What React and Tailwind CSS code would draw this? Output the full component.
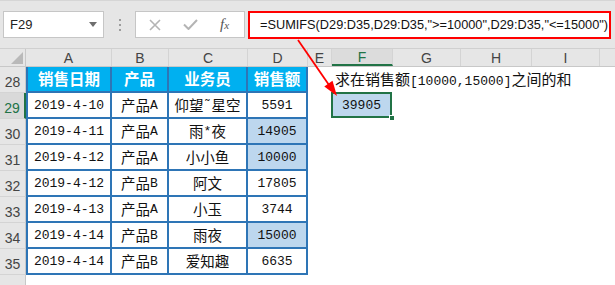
import React from "react";

const Z = ({ children, cls = "" }) => (
  <span className={"font-['Noto_Sans_CJK_SC',sans-serif] text-[14.5px] leading-none " + cls}>{children}</span>
);
const M = ({ children, cls = "" }) => (
  <span className={"font-['Liberation_Mono',monospace] text-[13px] leading-none " + cls}>{children}</span>
);

const rows = [
  { n: 29, d: "2019-4-10", p: "A", name: [["z", "仰望"], ["m", "˜"], ["z", "星空"]], v: "5591", h: false, sel: true },
  { n: 30, d: "2019-4-11", p: "A", name: [["z", "雨"], ["m", "*"], ["z", "夜"]], v: "14905", h: true },
  { n: 31, d: "2019-4-12", p: "A", name: [["z", "小小鱼"]], v: "10000", h: true },
  { n: 32, d: "2019-4-12", p: "B", name: [["z", "阿文"]], v: "17805", h: false },
  { n: 33, d: "2019-4-13", p: "A", name: [["z", "小玉"]], v: "3744", h: false },
  { n: 34, d: "2019-4-14", p: "B", name: [["z", "雨夜"]], v: "15000", h: true },
  { n: 35, d: "2019-4-14", p: "B", name: [["z", "爱知趣"]], v: "6635", h: false },
];

function RowHdr({ n, sel }) {
  return (
    <div
      className={
        "w-[26px] shrink-0 flex items-end justify-center pb-[3px] border-b border-[#d4d4d4] text-[14px] leading-none " +
        (sel
          ? "bg-[#d9d9d9] text-[#217346] border-r-2 border-r-[#217346]"
          : "bg-[#e6e6e6] text-[#444] border-r border-r-[#c8c8c8]")
      }
    >
      {n}
    </div>
  );
}

const tb = "border-[#2e75b6] border-r-2 border-b-2 flex items-center justify-center shrink-0";

export default function App() {
  return (
    <div className="relative w-[615px] h-[285px] overflow-hidden bg-white font-['Liberation_Sans',Arial,sans-serif]">
      {/* top bar */}
      <div className="h-[48px] bg-[#e6e6e6] border-t border-[#d6d6d6] flex items-start pt-[10px]">
        <div className="ml-[3px] w-[101px] h-[27px] bg-white border border-[#c6c6c6] flex items-center pl-[6px] pr-[6px]">
          <span className="text-[13px] text-[#222] flex-1">F29</span>
          <svg width="8" height="5" viewBox="0 0 8 5"><polygon points="0,0 8,0 4,5" fill="#6e6e6e" /></svg>
        </div>
        <div className="ml-[15px] h-[27px] flex flex-col justify-center gap-[3px]">
          <div className="w-[2px] h-[2px] bg-[#9d9d9d]" />
          <div className="w-[2px] h-[2px] bg-[#9d9d9d]" />
          <div className="w-[2px] h-[2px] bg-[#9d9d9d]" />
        </div>
        <div className="ml-[14px] w-[110px] h-[27px] bg-white border border-[#c6c6c6] flex items-center">
          <svg className="ml-[13px]" width="12" height="12" viewBox="0 0 12 12">
            <path d="M1 1 L11 11 M11 1 L1 11" stroke="#b4b4b4" strokeWidth="1.6" />
          </svg>
          <svg className="ml-[22px]" width="15" height="11" viewBox="0 0 15 11">
            <path d="M1 5.5 L5.5 10 L14 1" stroke="#b4b4b4" strokeWidth="2" fill="none" />
          </svg>
          <span className="ml-[22px] font-['Liberation_Serif',serif] italic text-[#555] text-[15px] leading-none">
            f<span className="text-[11px]">x</span>
          </span>
        </div>
        <div className="ml-[3px] w-[363px] h-[28px] bg-white border-2 border-[#ff0000] flex items-center pl-[10px]">
          <span className="text-[12.75px] text-[#111] whitespace-nowrap">
            =SUMIFS(D29:D35,D29:D35,"&gt;=10000",D29:D35,"&lt;=15000")
          </span>
        </div>
      </div>

      {/* column header */}
      <div className="flex h-[19px] bg-[#e6e6e6] border-t border-[#d0d0d0] border-b border-b-[#c8c8c8] text-[14px] text-[#444] leading-none">
        <div className="w-[26px] shrink-0 border-r border-[#c8c8c8] flex items-end justify-end pr-[2px] pb-[2px]">
          <svg width="12" height="12" viewBox="0 0 12 12"><polygon points="0,12 12,12 12,0" fill="#b9b9b9" /></svg>
        </div>
        <div className="w-[86px] shrink-0 border-r border-[#d4d4d4] flex items-center justify-center">A</div>
        <div className="w-[57px] shrink-0 border-r border-[#d4d4d4] flex items-center justify-center">B</div>
        <div className="w-[79px] shrink-0 border-r border-[#d4d4d4] flex items-center justify-center">C</div>
        <div className="w-[60px] shrink-0 border-r border-[#d4d4d4] flex items-center justify-center">D</div>
        <div className="w-[24px] shrink-0 border-r border-[#d4d4d4] flex items-center justify-center">E</div>
        <div className="w-[61px] shrink-0 border-r border-[#d4d4d4] border-b-2 border-b-[#217346] flex items-center justify-center text-[#217346] bg-[#dcdcdc]">F</div>
        <div className="w-[68px] shrink-0 border-r border-[#d4d4d4] flex items-center justify-center">G</div>
        <div className="w-[71px] shrink-0 border-r border-[#d4d4d4] flex items-center justify-center">H</div>
        <div className="w-[68px] shrink-0 border-r border-[#d4d4d4] flex items-center justify-center">I</div>
        <div className="flex-1" />
      </div>

      {/* row 28 */}
      <div className="flex h-[26px]">
        <RowHdr n={28} />
        <div className={tb + " w-[86px] border-l-2 bg-[#00b0f0]"}>
          <Z cls="text-white font-bold text-[15.5px]">销售日期</Z>
        </div>
        <div className={tb + " w-[57px] bg-[#00b0f0]"}>
          <Z cls="text-white font-bold text-[15.5px]">产品</Z>
        </div>
        <div className={tb + " w-[79px] bg-[#00b0f0]"}>
          <Z cls="text-white font-bold text-[15.5px]">业务员</Z>
        </div>
        <div className={tb + " w-[60px] bg-[#00b0f0]"}>
          <Z cls="text-white font-bold text-[15.5px]">销售额</Z>
        </div>
        <div className="w-[24px] shrink-0" />
        <div className="w-[61px] shrink-0 flex items-center pl-[3px] whitespace-nowrap overflow-visible">
          <span className="text-[#111] whitespace-nowrap">
            <Z cls="text-[15px]">求在销售额</Z>
            <M>[10000,15000]</M>
            <Z cls="text-[15px]">之间的和</Z>
          </span>
        </div>
        <div className="flex-1" />
      </div>

      {rows.map((r) => (
        <div key={r.n} className="flex h-[26px] text-[#111]">
          <RowHdr n={r.n} sel={r.sel} />
          <div className={tb + " w-[86px] border-l-2 pt-[1px]"}>
            <M>{r.d}</M>
          </div>
          <div className={tb + " w-[57px] pt-[1px]"}>
            <Z>产品</Z>
            <M>{r.p}</M>
          </div>
          <div className={tb + " w-[79px] pt-[1px]"}>
            {r.name.map(([t, s], i) => (t === "z" ? <Z key={i}>{s}</Z> : <M key={i}>{s}</M>))}
          </div>
          <div className={tb + " w-[60px] pt-[1px] " + (r.h ? "bg-[#bdd7ee]" : "")}>
            <M>{r.v}</M>
          </div>
          <div className="w-[24px] shrink-0" />
          <div className="w-[61px] shrink-0 relative">
            {r.sel && (
              <>
                <div className="absolute -top-px -left-px right-[1px] bottom-px bg-[#bdd7ee] border-2 border-[#217346] flex items-center justify-center pt-[1px]">
                  <M>39905</M>
                </div>
                <div className="absolute -right-[2px] -bottom-[2px] w-[6px] h-[6px] bg-[#217346] border border-white" />
              </>
            )}
          </div>
          <div className="flex-1" />
        </div>
      ))}

      {/* row 36 partial */}
      <div className="flex h-[10px]">
        <div className="w-[26px] shrink-0 bg-[#e6e6e6] border-r border-[#c8c8c8]" />
        <div className="flex-1" />
      </div>

      {/* arrow */}
      <svg className="absolute top-0 left-0 pointer-events-none" width="615" height="285" viewBox="0 0 615 285">
        <line x1="298" y1="40" x2="329" y2="85" stroke="#ff0000" strokeWidth="1.8" />
        <polygon points="337,96 324.3,86.6 332.5,80.8" fill="#ff0000" />
      </svg>
    </div>
  );
}
